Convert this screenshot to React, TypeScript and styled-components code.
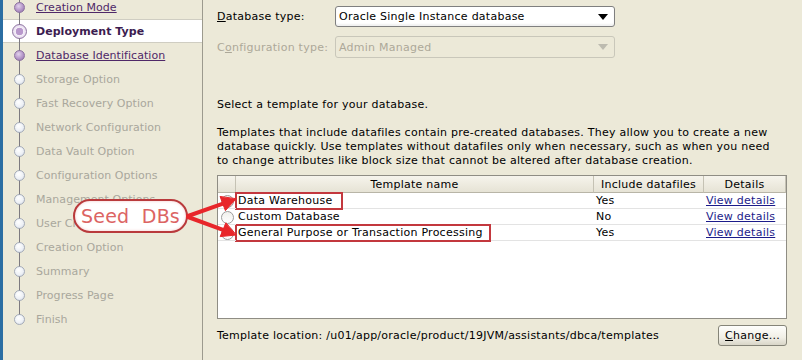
import React from "react";
import styled, { createGlobalStyle, css } from "styled-components";

const UI = `"DejaVu Sans", Verdana, sans-serif`;

const Global = createGlobalStyle`
  html, body { margin: 0; padding: 0; background: #ECE9D8; }
  #root { width: 802px; height: 360px; overflow: hidden; }
`;

const Frame = styled.div`
  position: relative;
  width: 802px;
  height: 360px;
  display: flex;
  background: #ece9d8;
  font-family: ${UI};
  font-size: 11px;
  letter-spacing: 0.25px;
  color: #000;
  overflow: hidden;
`;

const Sidebar = styled.nav`
  width: 199px;
  flex: none;
  border-left: 3px solid #2b6ea3;
  border-right: 1px solid #9c9a8e;
  background: #ece9d8;
  letter-spacing: 0.05px;
`;

const StepList = styled.ul`
  list-style: none;
  margin: -5px 0 0;
  padding: 0;
`;

type StepState = "done" | "current" | "todo";

const StepRow = styled.li<{ $state: StepState }>`
  height: 24px;
  box-sizing: border-box;
  display: flex;
  align-items: center;
  ${(p) =>
    p.$state === "current" &&
    css`
      background: #fff;
      border-top: 1px solid #cfcdc2;
      border-bottom: 1px solid #cfcdc2;
    `}
`;

const Marker = styled.span<{ $last: boolean }>`
  position: relative;
  width: 33px;
  height: 100%;
  flex: none;
  display: flex;
  align-items: center;
  justify-content: center;
  &::before {
    content: "";
    position: absolute;
    left: 16px;
    width: 1px;
    top: -1px;
    bottom: ${(p) => (p.$last ? "50%" : "-1px")};
    background: #7d7a80;
  }
`;

const Dot = styled.span<{ $state: StepState }>`
  position: relative;
  z-index: 1;
  border-radius: 50%;
  box-sizing: border-box;
  ${(p) =>
    p.$state === "done"
      ? css`
          width: 11px;
          height: 11px;
          border: 1px solid #8d72a0;
          background: radial-gradient(circle at 40% 35%, #e2d2ec 0%, #b596c9 55%, #8a6aa0 100%);
        `
      : p.$state === "current"
      ? css`
          width: 15px;
          height: 15px;
          border: 1px solid #8d72a0;
          background: radial-gradient(circle at 50% 50%, #b898cc 0%, #b898cc 38%, #f4eef8 44%, #e3d7ec 80%, #b9a3c8 100%);
        `
      : css`
          width: 11px;
          height: 11px;
          border: 1px solid #a4abb8;
          background: radial-gradient(circle at 40% 35%, #ffffff 0%, #eef1f6 55%, #cfd6e2 100%);
        `}
`;

const StepLabel = styled.span<{ $state: StepState; $link: boolean }>`
  white-space: nowrap;
  color: ${(p) => (p.$state === "todo" ? "#a9a79c" : "#4f2868")};
  font-weight: ${(p) => (p.$state === "current" ? "bold" : "normal")};
  text-decoration: ${(p) => (p.$link ? "underline" : "none")};
  ${(p) => p.$state === "current" && css`color: #3c1c50;`}
`;

const Content = styled.main`
  flex: 1;
  display: flex;
  flex-direction: column;
  padding: 6px 15px 0 14px;
`;

const FormRow = styled.div<{ $gap?: number }>`
  display: flex;
  align-items: center;
  margin-top: ${(p) => p.$gap ?? 0}px;
`;

const FieldLabel = styled.label<{ $disabled?: boolean }>`
  width: 118px;
  flex: none;
  color: ${(p) => (p.$disabled ? "#aca899" : "#000")};
`;

const Mnemonic = styled.span`
  text-decoration: underline;
`;

const Select = styled.div<{ $disabled?: boolean }>`
  width: 280px;
  height: ${(p) => (p.$disabled ? 22 : 21)}px;
  box-sizing: border-box;
  display: flex;
  align-items: center;
  justify-content: space-between;
  padding: 0 6px 0 3px;
  border-radius: 3px;
  border: 1px solid ${(p) => (p.$disabled ? "#c9c7ba" : "#7f7f7f")};
  background: ${(p) => (p.$disabled ? "#ece9d8" : "#fff")};
  color: ${(p) => (p.$disabled ? "#aca899" : "#000")};
  ${(p) => !p.$disabled && css`box-shadow: inset 0 -2px 2px rgba(0,0,0,0.06);`}
`;

const Caret = styled.span<{ $disabled?: boolean }>`
  width: 0;
  height: 0;
  border-left: 5px solid transparent;
  border-right: 5px solid transparent;
  border-top: 6px solid ${(p) => (p.$disabled ? "#bdbbb0" : "#000")};
`;

const Text = styled.p<{ $gap: number }>`
  margin: ${(p) => p.$gap}px 0 0;
  line-height: 14px;
  white-space: nowrap;
`;

const Table = styled.div`
  margin-top: 7px;
  width: 570px;
  height: 144px;
  box-sizing: border-box;
  border: 1px solid #8f8d84;
  background: #fff;
`;

const Grid = styled.div`
  display: grid;
  grid-template-columns: 18px 358px 110px 1fr;
`;

const HeadCell = styled.div`
  height: 17px;
  box-sizing: border-box;
  display: flex;
  align-items: center;
  justify-content: center;
  background: linear-gradient(#f6f4ec, #e6e3d5);
  border-right: 1px solid #c5c2b4;
  border-bottom: 1px solid #b8b5a7;
  &:last-child { border-right: none; }
`;

const Cell = styled.div`
  height: 16px;
  box-sizing: border-box;
  display: flex;
  align-items: center;
  padding-left: 2px;
  border-bottom: 1px solid #e3e3e3;
  white-space: nowrap;
`;

const RadioCell = styled.div`
  height: 16px;
  box-sizing: border-box;
  border-bottom: 1px solid #e3e3e3;
  position: relative;
`;

const Radio = styled.span`
  position: absolute;
  left: 3px;
  top: 2px;
  width: 13px;
  height: 13px;
  box-sizing: border-box;
  border-radius: 50%;
  border: 1px solid #9c9c9c;
  background: linear-gradient(#f0f0ec, #fff);
`;

const Highlight = styled.span<{ $pad: number }>`
  display: inline-block;
  margin-left: -3px;
  padding: 0 ${(p) => p.$pad}px 0 1px;
  line-height: 14px;
  border: 2px solid #c3383e;
`;

const Link = styled.a`
  color: #1c1c8a;
  text-decoration: underline;
`;

const Footer = styled.div`
  margin-top: 6px;
  width: 570px;
  display: flex;
  align-items: center;
  justify-content: space-between;
`;

const Button = styled.button`
  width: 69px;
  height: 21px;
  font: inherit;
  letter-spacing: inherit;
  color: #000;
  border: 1px solid #858478;
  border-radius: 3px;
  background: linear-gradient(#fefefc, #f1efe6 60%, #d9d6c8);
  padding: 0;
`;

const Callout = styled.div`
  position: absolute;
  left: 73px;
  top: 199px;
  width: 115px;
  height: 34px;
  box-sizing: border-box;
  border: 2px solid #b93a3c;
  border-radius: 17px;
  background: #fff;
  box-shadow: inset 0 0 3px rgba(220, 90, 90, 0.35);
  display: flex;
  align-items: center;
  justify-content: center;
  font-family: ${UI};
  font-size: 19px;
  letter-spacing: 0.2px;
  color: #dc6463;
  white-space: pre;
`;

const ArrowLayer = styled.svg`
  position: absolute;
  left: 180px;
  top: 190px;
`;

const steps: { label: string; state: StepState; link?: boolean }[] = [
  { label: "Creation Mode", state: "done", link: true },
  { label: "Deployment Type", state: "current" },
  { label: "Database Identification", state: "done", link: true },
  { label: "Storage Option", state: "todo" },
  { label: "Fast Recovery Option", state: "todo" },
  { label: "Network Configuration", state: "todo" },
  { label: "Data Vault Option", state: "todo" },
  { label: "Configuration Options", state: "todo" },
  { label: "Management Options", state: "todo" },
  { label: "User Credentials", state: "todo" },
  { label: "Creation Option", state: "todo" },
  { label: "Summary", state: "todo" },
  { label: "Progress Page", state: "todo" },
  { label: "Finish", state: "todo" },
];

const templates = [
  { name: "Data Warehouse", files: "Yes", pad: 9 },
  { name: "Custom Database", files: "No", pad: 0 },
  { name: "General Purpose or Transaction Processing", files: "Yes", pad: 6 },
];

export default function App() {
  return (
    <>
      <Global />
      <Frame>
        <Sidebar>
          <StepList>
            {steps.map((s, i) => (
              <StepRow key={s.label} $state={s.state}>
                <Marker $last={i === steps.length - 1}>
                  <Dot $state={s.state} />
                </Marker>
                <StepLabel $state={s.state} $link={!!s.link}>
                  {s.label}
                </StepLabel>
              </StepRow>
            ))}
          </StepList>
        </Sidebar>
        <Content>
          <FormRow>
            <FieldLabel>
              <Mnemonic>D</Mnemonic>atabase type:
            </FieldLabel>
            <Select>
              <span>Oracle Single Instance database</span>
              <Caret />
            </Select>
          </FormRow>
          <FormRow $gap={9}>
            <FieldLabel $disabled>
              C<Mnemonic>o</Mnemonic>nfiguration type:
            </FieldLabel>
            <Select $disabled>
              <span>Admin Managed</span>
              <Caret $disabled />
            </Select>
          </FormRow>
          <Text $gap={40}>Select a template for your database.</Text>
          <Text $gap={14}>
            Templates that include datafiles contain pre-created databases. They allow you to create a new
            <br />
            database quickly. Use templates without datafiles only when necessary, such as when you need
            <br />
            to change attributes like block size that cannot be altered after database creation.
          </Text>
          <Table>
            <Grid>
              <HeadCell />
              <HeadCell>Template name</HeadCell>
              <HeadCell>Include datafiles</HeadCell>
              <HeadCell>Details</HeadCell>
              {templates.map((t) => (
                <React.Fragment key={t.name}>
                  <RadioCell>
                    <Radio />
                  </RadioCell>
                  <Cell>{t.pad ? <Highlight $pad={t.pad}>{t.name}</Highlight> : t.name}</Cell>
                  <Cell>{t.files}</Cell>
                  <Cell>
                    <Link>View details</Link>
                  </Cell>
                </React.Fragment>
              ))}
            </Grid>
          </Table>
          <Footer>
            <span>Template location: /u01/app/oracle/product/19JVM/assistants/dbca/templates</span>
            <Button>
              <Mnemonic>C</Mnemonic>hange...
            </Button>
          </Footer>
        </Content>
        <Callout>{"Seed  DBs"}</Callout>
        <ArrowLayer width="70" height="56" viewBox="0 0 70 56">
          <g fill="#e8262a" stroke="#e8262a" strokeLinecap="round">
            <line x1="8" y1="26" x2="43" y2="13.7" strokeWidth="4" />
            <polygon points="56,9 45.4,20.6 40.2,6.8" strokeWidth="1" />
            <line x1="8" y1="27" x2="43" y2="39.8" strokeWidth="4" />
            <polygon points="56,45 40.2,46.6 45.8,33.1" strokeWidth="1" />
          </g>
        </ArrowLayer>
      </Frame>
    </>
  );
}
